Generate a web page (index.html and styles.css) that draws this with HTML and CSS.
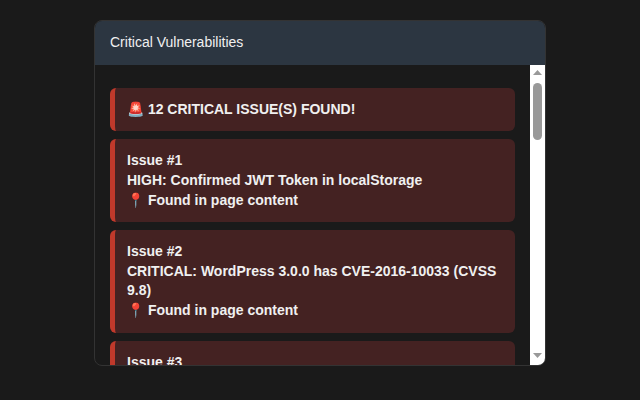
FILE: index.html
```html
<!DOCTYPE html>
<html lang="en">
<head>
<meta charset="utf-8">
<title>Critical Vulnerabilities</title>
<link rel="stylesheet" href="styles.css">
</head>
<body>
<section class="card">
  <header class="card-header">Critical Vulnerabilities</header>
  <div class="card-main">
    <div class="card-body">
      <div class="alert">🚨 12 CRITICAL ISSUE(S) FOUND!</div>
      <div class="alert">Issue #1<br>HIGH: Confirmed JWT Token in localStorage<br>📍 Found in page content</div>
      <div class="alert">Issue #2<br>CRITICAL: WordPress 3.0.0 has CVE-2016-10033 (CVSS 9.8)<br>📍 Found in page content</div>
      <div class="alert">Issue #3</div>
    </div>
    <div class="scrollbar" aria-hidden="true">
      <svg class="arrow" width="9" height="5" viewBox="0 0 9 5"><path d="M4.5 0 9 5H0z"/></svg>
      <div class="thumb"></div>
      <svg class="arrow arrow-down" width="9" height="5" viewBox="0 0 9 5"><path d="M0 0H9L4.5 5z"/></svg>
    </div>
  </div>
</section>
</body>
</html>
```
FILE: styles.css
```css
html, body {
  height: 100%;
}
body {
  margin: 0;
  padding-top: 20px;
  box-sizing: border-box;
  display: flex;
  justify-content: center;
  background: #1a1a1a;
  font-family: "Liberation Sans", Arial, sans-serif;
  font-size: 14px;
  line-height: 1.4;
  color: #f0f0f0;
}
.card {
  width: 452px;
  height: 346px;
  box-sizing: border-box;
  border: 1px solid #333;
  border-radius: 8px;
  display: flex;
  flex-direction: column;
  background: #1a1a1a;
}
.card-header {
  flex: none;
  padding: 12px 15px;
  border-radius: 7px 7px 0 0;
  background: #2c3641;
}
.card-main {
  flex: 1;
  min-height: 0;
  display: flex;
}
.card-body {
  flex: 1;
  min-width: 0;
  overflow: hidden;
  padding: 23.2px 15px 0;
  border-radius: 0 0 0 7px;
}
.alert {
  background: #442222;
  border-left: 5px solid #c0392b;
  border-radius: 6px;
  padding: 12px;
  margin-bottom: 8px;
  font-weight: 700;
}
.scrollbar {
  flex: none;
  width: 15px;
  display: flex;
  flex-direction: column;
  align-items: center;
  padding-top: 5px;
  padding-bottom: 7px;
  box-sizing: border-box;
  background: #fff;
  border-radius: 0 0 7px 0;
}
.arrow {
  flex: none;
  fill: #999;
}
.thumb {
  flex: none;
  width: 9px;
  height: 57px;
  margin-top: 8px;
  border-radius: 5px;
  background: #999;
}
.arrow-down {
  margin-top: auto;
}
```
